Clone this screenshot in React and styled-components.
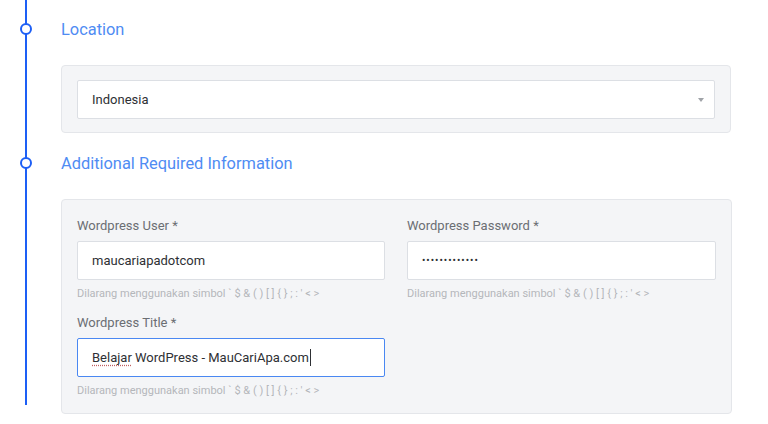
import styled, { createGlobalStyle } from 'styled-components'

const GlobalStyle = createGlobalStyle`
  html, body {
    margin: 0;
    padding: 0;
    background: #ffffff;
    font-family: Roboto, 'Liberation Sans', sans-serif;
  }
`

const colors = {
  rail: '#1d5ff5',
  heading: '#4f8cf3',
  panel: '#f4f5f7',
  panelBorder: '#e4e6ea',
  inputBorder: '#dcdfe4',
  focus: '#4a88f2',
  label: '#6b6e73',
  hint: '#b4b7bb',
  text: '#2e3034',
}

const Page = styled.div`
  width: 768px;
  height: 424px;
  overflow: hidden;
`

const Step = styled.section`
  display: flex;
  width: 731px;
`

const Rail = styled.div`
  position: relative;
  flex: 0 0 61px;
  background: linear-gradient(${colors.rail}, ${colors.rail}) no-repeat 25px 0 / 2px
    100%;
  margin-bottom: ${(p) => (p.$last ? '19px' : '0')};
`

const Dot = styled.span`
  position: absolute;
  left: 20px;
  top: ${(p) => p.$top}px;
  width: 8px;
  height: 8px;
  border: 2px solid ${colors.rail};
  border-radius: 50%;
  background: #ffffff;
`

const Body = styled.div`
  flex: 1;
  padding-top: ${(p) => p.$top}px;
  padding-bottom: ${(p) => p.$bottom}px;
`

const Heading = styled.h2`
  margin: 0 0 25px;
  font-size: 16.4px;
  line-height: 20px;
  font-weight: 400;
  color: ${colors.heading};
`

const Panel = styled.div`
  background: ${colors.panel};
  border: 1px solid ${colors.panelBorder};
  border-radius: 4px;
  padding: ${(p) => p.$pad};
`

const Grid = styled.div`
  display: grid;
  grid-template-columns: 308px 309px;
  column-gap: 22px;
  row-gap: 13px;
`

const Group = styled.div`
  display: flex;
  flex-direction: column;
`

const Label = styled.label`
  font-size: 13px;
  line-height: 18px;
  color: ${colors.label};
  margin-bottom: 6px;
`

const Field = styled.div`
  position: relative;
  display: flex;
  align-items: center;
  height: ${(p) => p.$h || 37}px;
  padding: 0 14px;
  background: #ffffff;
  border: 1px solid ${(p) => (p.$focused ? colors.focus : colors.inputBorder)};
  border-radius: 2px;
  font-size: 13px;
  color: ${colors.text};
  white-space: nowrap;
`

const Dots = styled.span`
  font-size: 10px;
  letter-spacing: 1px;
  color: ${colors.text};
`

const Misspelled = styled.span`
  text-decoration: underline dotted #c06060;
  text-underline-offset: 3px;
`

const Caret = styled.span`
  display: inline-block;
  width: 1px;
  height: 17px;
  margin-left: 1px;
  background: ${colors.text};
`

const Arrow = styled.span`
  position: absolute;
  right: 10px;
  top: 50%;
  margin-top: -2px;
  border-left: 3px solid transparent;
  border-right: 3px solid transparent;
  border-top: 4px solid #a0a3a8;
`

const Hint = styled.div`
  margin-top: 7px;
  font-size: 11px;
  line-height: 14px;
  color: ${colors.hint};
`

const HINT = "Dilarang menggunakan simbol ` $ & ( ) [ ] { } ; : ' < >"

export default function App() {
  return (
    <Page>
      <GlobalStyle />
      <Step>
        <Rail>
          <Dot $top={23} />
        </Rail>
        <Body $top={20} $bottom={20}>
          <Heading>Location</Heading>
          <Panel $pad="14px 15px 13px">
            <Field $h={37}>
              Indonesia
              <Arrow />
            </Field>
          </Panel>
        </Body>
      </Step>
      <Step>
        <Rail $last>
          <Dot $top={4} />
        </Rail>
        <Body $top={1} $bottom={10}>
          <Heading>Additional Required Information</Heading>
          <Panel $pad="17px 15px 15px">
            <Grid>
              <Group>
                <Label>Wordpress User *</Label>
                <Field>maucariapadotcom</Field>
                <Hint>{HINT}</Hint>
              </Group>
              <Group>
                <Label>Wordpress Password *</Label>
                <Field>
                  <Dots>{'•••••••••••••'}</Dots>
                </Field>
                <Hint>{HINT}</Hint>
              </Group>
              <Group>
                <Label>Wordpress Title *</Label>
                <Field $focused $h={37}>
                  <Misspelled>Belajar</Misspelled>&nbsp;WordPress - MauCariApa.com
                  <Caret />
                </Field>
                <Hint>{HINT}</Hint>
              </Group>
            </Grid>
          </Panel>
        </Body>
      </Step>
    </Page>
  )
}
